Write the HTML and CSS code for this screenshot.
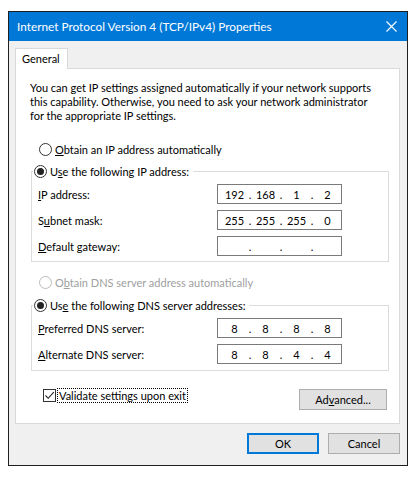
FILE: index.html
```html
<!DOCTYPE html>
<html>
<head>
  <meta charset="UTF-8">
  <title>Internet Protocol Version 4 (TCP/IPv4) Properties</title>
  <link rel="stylesheet" href="styles.css">
</head>
<body>
  <!-- Dialog window -->
  <div class="window">
    <div class="titlebar">
      <span class="title">Internet Protocol Version 4 (TCP/IPv4) Properties</span>
      <svg class="close" width="11" height="11" viewBox="0 0 11 11">
        <path d="M0.5 0.5L10.5 10.5M10.5 0.5L0.5 10.5" stroke="#fff" stroke-width="1.1" fill="none"/>
      </svg>
    </div>

    <div class="dialog">
      <!-- Tab strip -->
      <div class="tabs">
        <div class="tab">General</div>
      </div>

      <!-- General tab page -->
      <div class="panel">
        <p class="intro">You can get IP settings assigned automatically if your network supports<br>this capability. Otherwise, you need to ask your network administrator<br>for the appropriate IP settings.</p>

        <div class="option first">
          <span class="radio"></span>
          <span><u>O</u>btain an IP address automatically</span>
        </div>

        <fieldset class="group">
          <legend class="option">
            <span class="radio on"></span>
            <span>U<u>s</u>e the following IP address:</span>
          </legend>
          <div class="field">
            <span class="label"><u>I</u>P address:</span>
            <div class="ipbox">
              <span class="oct">192</span><span class="dot">.</span><span class="oct">168</span><span class="dot">.</span><span class="oct">1</span><span class="dot">.</span><span class="oct">2</span>
            </div>
          </div>
          <div class="field">
            <span class="label">S<u>u</u>bnet mask:</span>
            <div class="ipbox">
              <span class="oct">255</span><span class="dot">.</span><span class="oct">255</span><span class="dot">.</span><span class="oct">255</span><span class="dot">.</span><span class="oct">0</span>
            </div>
          </div>
          <div class="field">
            <span class="label"><u>D</u>efault gateway:</span>
            <div class="ipbox">
              <span class="oct"></span><span class="dot">.</span><span class="oct"></span><span class="dot">.</span><span class="oct"></span><span class="dot">.</span><span class="oct"></span>
            </div>
          </div>
        </fieldset>

        <div class="option disabled">
          <span class="radio"></span>
          <span>O<u>b</u>tain DNS server address automatically</span>
        </div>

        <fieldset class="group dns">
          <legend class="option">
            <span class="radio on"></span>
            <span>Us<u>e</u> the following DNS server addresses:</span>
          </legend>
          <div class="field">
            <span class="label"><u>P</u>referred DNS server:</span>
            <div class="ipbox">
              <span class="oct">8</span><span class="dot">.</span><span class="oct">8</span><span class="dot">.</span><span class="oct">8</span><span class="dot">.</span><span class="oct">8</span>
            </div>
          </div>
          <div class="field">
            <span class="label"><u>A</u>lternate DNS server:</span>
            <div class="ipbox">
              <span class="oct">8</span><span class="dot">.</span><span class="oct">8</span><span class="dot">.</span><span class="oct">4</span><span class="dot">.</span><span class="oct">4</span>
            </div>
          </div>
        </fieldset>

        <div class="bottom-row">
          <div class="check">
            <span class="box">
              <svg width="11" height="11" viewBox="0 0 11 11">
                <path d="M1.5 5.5L4.2 8.3L9.8 2.2" stroke="#222" stroke-width="1.1" fill="none"/>
              </svg>
            </span>
            <span class="focus">Validate settings upon exit</span>
          </div>
          <button class="btn adv">Ad<u>v</u>anced...</button>
        </div>
      </div>

      <!-- Dialog buttons -->
      <div class="footer">
        <button class="btn ok">OK</button>
        <button class="btn">Cancel</button>
      </div>
    </div>
  </div>
</body>
</html>
```

FILE: styles.css
```css
body {
  margin: 0;
  background: #fff;
  font-family: Lato, "Liberation Sans", sans-serif;
  font-size: 11px;
  color: #000;
}
u { text-decoration-thickness: 1px; text-underline-offset: 1px; }

/* Window frame */
.window {
  width: 400px;
  height: 455px;
  box-sizing: border-box;
  margin: 11px 0 0 8px;
  border: 1px solid #1f1f1f;
  background: #f0f0f0;
  display: flex;
  flex-direction: column;
}
.titlebar {
  height: 29px;
  flex: none;
  background: #0078d7;
  color: #fff;
  display: flex;
  align-items: center;
  justify-content: space-between;
  padding: 0 10px 0 8px;
  font-size: 11.8px;
}
.close { display: block; }

/* Dialog body */
.dialog {
  flex: 1;
  padding: 7px 7px 0 6px;
}
.tabs { display: flex; }
.tab {
  width: 53px;
  height: 21px;
  box-sizing: border-box;
  border: 1px solid #d9d9d9;
  border-bottom: none;
  background: #fff;
  padding: 3px 0 0 6px;
  margin-bottom: -1px;
  position: relative;
}
.panel {
  background: #fff;
  border: 1px solid #d9d9d9;
  padding: 12px 10px 13px 14px;
}
.intro {
  margin: 0;
  line-height: 14px;
  white-space: nowrap;
}

/* Radio options */
.option {
  display: flex;
  align-items: center;
  height: 16px;
  gap: 3px;
}
.first { margin: 18px 0 0 9px; }
.disabled { margin: 12px 0 0 9px; color: #a0a0a0; }
.radio {
  width: 11px;
  height: 11px;
  border: 1px solid #333;
  border-radius: 50%;
  background: #fff;
  position: relative;
}
.disabled .radio { border-color: #bcbcbc; }
.radio.on::after {
  content: "";
  position: absolute;
  left: 2px;
  top: 2px;
  width: 7px;
  height: 7px;
  border-radius: 50%;
  background: #222;
}

/* Group boxes */
.group {
  margin: 6px 0 0 1px;
  padding: 5px 0 5px 6px;
  border: 1px solid #dcdcdc;
  min-width: 0;
}
.group legend {
  padding: 0 4px 0 1px;
  margin-left: -5px;
}
.dns { margin-top: 7px; padding-bottom: 6px; }
.field {
  display: flex;
  align-items: center;
  height: 20px;
}
.field + .field { margin-top: 6px; }
.label { width: 179px; }
.ipbox {
  width: 125px;
  height: 20px;
  box-sizing: border-box;
  border: 1px solid #7a7a7a;
  padding-left: 3px;
  display: flex;
  align-items: center;
}
.oct { width: 27px; text-align: center; }
.dot { width: 4px; text-align: center; }

/* Checkbox and Advanced */
.bottom-row {
  display: flex;
  justify-content: space-between;
  align-items: flex-start;
  margin-top: 17px;
  padding: 0 2px 0 13px;
}
.check {
  display: flex;
  align-items: center;
  gap: 2px;
  height: 14px;
}
.box {
  width: 11px;
  height: 11px;
  border: 1px solid #333;
  display: flex;
}
.focus {
  outline: 1px dotted #000;
  line-height: 13px;
  padding: 0 1px;
}

/* Buttons */
.btn {
  font-family: inherit;
  font-size: 11px;
  color: #000;
  background: #e1e1e1;
  border: 1px solid #adadad;
  height: 21px;
  padding: 0;
  margin: 0;
}
.adv { width: 88px; margin-top: 1px; }
.footer {
  display: flex;
  justify-content: flex-end;
  gap: 9px;
  margin-top: 9px;
}
.footer .btn { width: 72px; }
.ok { border: 2px solid #0078d7; }
```
